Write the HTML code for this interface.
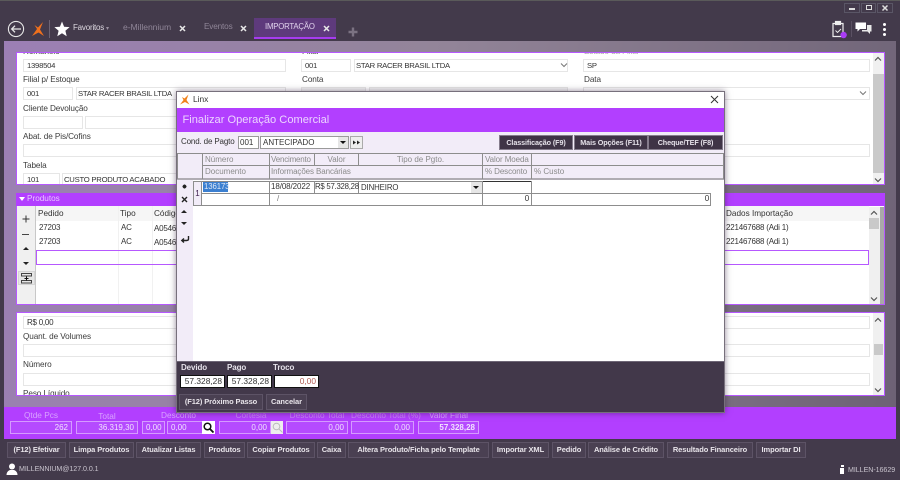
<!DOCTYPE html>
<html><head><meta charset="utf-8"><style>
html,body{margin:0;padding:0;width:900px;height:480px;overflow:hidden;background:#433a4b}
#w{position:relative;width:900px;height:480px;overflow:hidden;font-family:"Liberation Sans",sans-serif;font-size:8px;color:#333;filter:blur(.3px)}
#w div,#w svg{position:absolute}
.t{white-space:nowrap;line-height:10px;height:10px;letter-spacing:-.2px}
.l{color:#3c3c3c;font-size:8.2px;letter-spacing:-.1px}
.i{background:#fff;border:1px solid #e6e6e6;box-sizing:border-box;height:13px;line-height:11px;padding-left:3px;white-space:nowrap;overflow:hidden;font-size:7.7px;letter-spacing:-.25px;color:#333}
.b{background:#4a4052;border:1px solid #5d5366;box-sizing:border-box;height:16px;line-height:14px;text-align:center;color:#e8e4ea;font-weight:bold;font-size:7.5px;white-space:nowrap;letter-spacing:-.1px}
.h{color:#8b8b8b;font-size:8px;white-space:nowrap;line-height:10px;height:10px}
.f{background:#b54bff;border:1px solid #d59bff;box-sizing:border-box;height:13px;line-height:11px;text-align:right;padding-right:3px;color:#f2e2ff;font-size:8px;white-space:nowrap}
.q{color:#d9a2ff;font-size:8.3px;white-space:nowrap;line-height:10px;height:10px;text-align:center}
.d{background:#3f3446;border:1px solid #857c8c;box-sizing:border-box;height:15px;line-height:13px;text-align:center;color:#e6e2ea;font-weight:bold;font-size:7.2px;white-space:nowrap;letter-spacing:-.1px}
.m{background:#fff;border:1px solid #111;box-sizing:border-box;height:13px;line-height:11px;text-align:right;padding-right:2px;font-size:8.4px;color:#333}
.v{background:#8d8d8d;width:1px}
.g{background:#8d8d8d;height:1px}
</style></head><body><div id="w">

<!-- top bar -->
<div style="left:0;top:0;width:900px;height:1px;background:#5a5a5a"></div>
<svg style="left:7px;top:20px" width="18" height="18" viewBox="0 0 18 18" fill="none" stroke="#e6e6e6" stroke-width="1.1"><circle cx="9" cy="9" r="7.6"/><path d="M14 9H5M8 5.7L4.7 9 8 12.3" stroke-width="1.3"/></svg>
<svg style="left:31px;top:21px" width="14" height="16" viewBox="0 0 14 16"><path d="M1 15L6 8 3.5 4 7 6.5 12 1 9 8.5 13 15 7.5 11.5Z" fill="#f0701c"/></svg>
<div style="left:49px;top:20px;width:1px;height:18px;background:#6d6474"></div>
<svg style="left:54px;top:21px" width="16" height="16" viewBox="0 0 16 16"><path d="M8 .5L10.1 5.7 15.6 6.1 11.4 9.7 12.7 15.2 8 12.3 3.3 15.2 4.6 9.7.4 6.1 5.9 5.7Z" fill="#fff"/></svg>
<div class="t" style="left:73px;top:23px;color:#ddd8e0;font-size:8px">Favoritos</div>
<div class="t" style="left:106px;top:24px;color:#9a91a0;font-size:6px">▾</div>
<div class="t" style="left:123px;top:22px;color:#8f8597;font-size:8.6px;letter-spacing:-.05px">e-Millennium</div>
<div class="t" style="left:204px;top:22px;color:#8f8597;font-size:8.2px;letter-spacing:-.15px">Eventos</div>
<svg style="left:179px;top:25px" width="7" height="7" viewBox="0 0 7 7" stroke="#e8e8e8" stroke-width="1.5"><path d="M1 1L6 6M6 1L1 6"/></svg>
<svg style="left:240px;top:25px" width="7" height="7" viewBox="0 0 7 7" stroke="#e8e8e8" stroke-width="1.5"><path d="M1 1L6 6M6 1L1 6"/></svg>
<div style="left:254px;top:18px;width:82px;height:19px;background:#5e3a7c"></div>
<div style="left:254px;top:37px;width:82px;height:2px;background:#a63cf0"></div>
<div class="t" style="left:265px;top:22px;color:#e0d2ec;font-size:7.8px;letter-spacing:-.2px">IMPORTAÇÃO</div>
<svg style="left:323px;top:25px" width="7" height="7" viewBox="0 0 7 7" stroke="#e8e8e8" stroke-width="1.5"><path d="M1 1L6 6M6 1L1 6"/></svg>
<svg style="left:348px;top:27px" width="10" height="10" viewBox="0 0 10 10" fill="#7b7282"><path d="M3.8 .5h2.4v3.3h3.3v2.4H6.2v3.3H3.8V6.2H.5V3.8h3.300z"/></svg>

<div style="left:844px;top:3px;width:16px;height:10px;border:1px solid #5a5666;box-sizing:border-box"></div>
<div style="left:861px;top:3px;width:15px;height:10px;border:1px solid #5a5666;box-sizing:border-box"></div>
<div style="left:877px;top:3px;width:16px;height:10px;border:1px solid #5a5666;box-sizing:border-box"></div>
<div style="left:849px;top:8px;width:6px;height:2px;background:#ddd"></div>
<div style="left:866px;top:5px;width:6px;height:5px;border:1.5px solid #ddd;box-sizing:border-box"></div>
<svg style="left:881px;top:4px" width="8" height="8" viewBox="0 0 8 8" stroke="#ddd" stroke-width="1.5"><path d="M1.5 1.5L6.5 6.5M6.5 1.5L1.5 6.5"/></svg>

<svg style="left:831px;top:20px" width="20" height="19" viewBox="0 0 20 19" fill="none" stroke="#eee" stroke-width="1.2"><path d="M4 3.5H2v13h10V3.500h-2"/><rect x="4.500" y="1.500" width="5" height="3" fill="#eee"/><path d="M4.500 10.500l2 2 3.500-3.500" stroke-width=".9"/><circle cx="12.600" cy="15" r="3.200" fill="#a93cf5" stroke="none"/></svg>
<div style="left:851px;top:21px;width:1px;height:16px;background:#5b5163"></div>
<svg style="left:855px;top:22px" width="17" height="13" viewBox="0 0 17 13"><path d="M.5 .5H11V7H5L2.500 9.500V7H.5Z" fill="#fff"/><path d="M12 3h4.500v6.500H15V12L12.500 9.500H7V8h5Z" fill="#e8e8e8"/></svg>
<div style="left:883px;top:23px;width:3px;height:3px;background:#fff;border-radius:50%"></div>
<div style="left:883px;top:28px;width:3px;height:3px;background:#fff;border-radius:50%"></div>
<div style="left:883px;top:33px;width:3px;height:3px;background:#fff;border-radius:50%"></div>

<!-- content bg -->
<div style="left:4px;top:41px;width:892px;height:366px;background:linear-gradient(100deg,#9c7fb5 0%,#938599 45%,#6d6275 100%)"></div>

<!-- top form -->
<div style="left:16px;top:52px;width:869px;height:133px;background:#fff;border:1px solid #b658ff;box-sizing:border-box;overflow:hidden"></div>
<div style="left:17px;top:53px;width:867px;height:131px;overflow:hidden">
 <div class="t l" style="left:6px;top:-6px">Romaneio</div>
 <div class="t l" style="left:285px;top:-6px">Filial</div>
 <div class="t l" style="left:567px;top:-6px;color:#aaa">Estado da Filial</div>
 <div class="i" style="left:6px;top:6px;width:263px">1398504</div>
 <div class="i" style="left:284px;top:6px;width:50px">001</div>
 <div class="i" style="left:337px;top:6px;width:214px;padding-left:1px">STAR RACER BRASIL LTDA</div>
 <div class="i" style="left:566px;top:6px;width:287px">SP</div>
 <div class="t l" style="left:6px;top:22px">Filial p/ Estoque</div>
 <div class="t l" style="left:285px;top:22px">Conta</div>
 <div class="t l" style="left:567px;top:22px">Data</div>
 <div class="i" style="left:6px;top:34px;width:50px">001</div>
 <div class="i" style="left:59px;top:34px;width:210px;padding-left:1px">STAR RACER BRASIL LTDA</div>
 <div class="i" style="left:284px;top:34px;width:65px;background:#f4f4f4"></div>
 <div class="i" style="left:352px;top:34px;width:199px;background:#f4f4f4"></div>
 <div class="i" style="left:566px;top:34px;width:287px"></div>
 <div class="t l" style="left:6px;top:51px">Cliente Devolução</div>
 <div class="i" style="left:6px;top:63px;width:60px"></div>
 <div class="i" style="left:68px;top:63px;width:200px"></div>
 <div class="t l" style="left:6px;top:79px">Abat. de Pis/Cofins</div>
 <div class="i" style="left:6px;top:91px;width:847px"></div>
 <div class="t l" style="left:6px;top:108px">Tabela</div>
 <div class="i" style="left:6px;top:120px;width:37px">101</div>
 <div class="i" style="left:45px;top:120px;width:200px;padding-left:1px">CUSTO PRODUTO ACABADO</div>
 <svg style="left:543px;top:9px" width="8" height="6" viewBox="0 0 8 6" fill="none" stroke="#777" stroke-width="1"><path d="M1 1.500L4 4.500 7 1.500"/></svg>
 <svg style="left:842px;top:37px" width="8" height="6" viewBox="0 0 8 6" fill="none" stroke="#777" stroke-width="1"><path d="M1 1.500L4 4.500 7 1.500"/></svg>
 <div style="left:856px;top:0;width:11px;height:131px;background:#f0f0f0"></div>
 <div style="left:856px;top:21px;width:11px;height:99px;background:#c9c9c9"></div>
 <svg style="left:857px;top:3px" width="8" height="6" viewBox="0 0 8 6" fill="none" stroke="#555" stroke-width="1.2"><path d="M1 4.500L4 1.500 7 4.500"/></svg>
 <svg style="left:857px;top:124px" width="8" height="6" viewBox="0 0 8 6" fill="none" stroke="#555" stroke-width="1.2"><path d="M1 1.500L4 4.500 7 1.500"/></svg>
</div>

<!-- produtos -->
<div style="left:16px;top:193px;width:869px;height:13px;background:#b23fff"></div>
<div style="left:19px;top:197px;width:0;height:0;border-left:3px solid transparent;border-right:3px solid transparent;border-top:4px solid #fff"></div>
<div class="t" style="left:27px;top:194px;color:#e6c6ff;font-size:8.2px;letter-spacing:0">Produtos</div>
<div style="left:16px;top:206px;width:869px;height:99px;background:#fff;border:1px solid #b658ff;border-top:0;box-sizing:border-box"></div>
<div style="left:17px;top:206px;width:19px;height:98px;background:#f0f0f0;border-right:1px solid #c8c8c8;box-sizing:border-box"></div>
<div style="left:36px;top:206px;width:833px;height:15px;background:#f6f6f6"></div>
<div style="left:118px;top:206px;width:1px;height:98px;background:#f1f1f1"></div>
<div style="left:152px;top:206px;width:1px;height:98px;background:#f1f1f1"></div>
<div class="t" style="left:38px;top:209px;font-size:8.2px;letter-spacing:0">Pedido</div>
<div class="t" style="left:120px;top:209px;font-size:8.2px;letter-spacing:0">Tipo</div>
<div class="t" style="left:154px;top:209px;font-size:8.2px;letter-spacing:0">Código</div>
<div class="t" style="left:726px;top:209px;font-size:8.2px;letter-spacing:0">Dados Importação</div>
<div class="t" style="left:39px;top:223px">27203</div><div class="t" style="left:121px;top:223px">AC</div><div class="t" style="left:154px;top:224px">A05461</div><div class="t" style="left:726px;top:223px">221467688 (Adi 1)</div>
<div class="t" style="left:39px;top:237px">27203</div><div class="t" style="left:121px;top:237px">AC</div><div class="t" style="left:154px;top:238px">A05462</div><div class="t" style="left:726px;top:237px">221467688 (Adi 1)</div>
<div style="left:36px;top:250px;width:833px;height:15px;border:1.5px solid #b658ff;box-sizing:border-box"></div>
<svg style="left:22px;top:215px" width="8" height="8" viewBox="0 0 8 8" stroke="#333" stroke-width="1"><path d="M4 .5V7.500M.5 4H7.500"/></svg>
<div style="left:22px;top:234px;width:7px;height:1px;background:#444"></div>
<div style="left:23px;top:247px;width:0;height:0;border-left:3px solid transparent;border-right:3px solid transparent;border-bottom:3px solid #222"></div>
<div style="left:23px;top:262px;width:0;height:0;border-left:3px solid transparent;border-right:3px solid transparent;border-top:3px solid #222"></div>
<div style="left:18px;top:271px;width:17px;height:14px;background:#e6e6e6;border:1px solid #d5d5d5;box-sizing:border-box"></div>
<svg style="left:21px;top:273px" width="11" height="11" viewBox="0 0 11 11" fill="none" stroke="#444"><rect x=".5" y=".5" width="10" height="2.500"/><rect x=".5" y="7.500" width="10" height="2.500"/><path d="M5.500 3.500v4M3.500 5.500h4" stroke="#111"/></svg>
<div style="left:869px;top:207px;width:11px;height:97px;background:#f0f0f0"></div>
<div style="left:880px;top:207px;width:4px;height:97px;background:#a9a9a9"></div>
<div style="left:869px;top:218px;width:10px;height:11px;background:#c9c9c9"></div>
<svg style="left:870px;top:210px" width="8" height="6" viewBox="0 0 8 6" fill="none" stroke="#555" stroke-width="1.2"><path d="M1 4.500L4 1.500 7 4.500"/></svg>
<svg style="left:870px;top:296px" width="8" height="6" viewBox="0 0 8 6" fill="none" stroke="#555" stroke-width="1.2"><path d="M1 1.500L4 4.500 7 1.500"/></svg>

<!-- lower form -->
<div style="left:16px;top:312px;width:869px;height:84px;background:#fff;border:1px solid #b658ff;box-sizing:border-box"></div>
<div style="left:17px;top:313px;width:867px;height:82px;overflow:hidden">
 <div class="i" style="left:6px;top:3px;width:847px;font-size:8px">R$ 0,00</div>
 <div class="t l" style="left:6px;top:19px">Quant. de Volumes</div>
 <div class="i" style="left:6px;top:31px;width:847px"></div>
 <div class="t l" style="left:6px;top:47px">Número</div>
 <div class="i" style="left:6px;top:60px;width:847px"></div>
 <div class="t l" style="left:6px;top:76px">Peso Líquido</div>
 <div style="left:856px;top:0;width:11px;height:82px;background:#f0f0f0"></div>
 <div style="left:857px;top:31px;width:9px;height:11px;background:#c9c9c9"></div>
 <svg style="left:857px;top:4px" width="8" height="6" viewBox="0 0 8 6" fill="none" stroke="#555" stroke-width="1.2"><path d="M1 4.500L4 1.500 7 4.500"/></svg>
 <svg style="left:857px;top:74px" width="8" height="6" viewBox="0 0 8 6" fill="none" stroke="#555" stroke-width="1.2"><path d="M1 1.500L4 4.500 7 1.500"/></svg>
</div>

<!-- totals -->
<div style="left:4px;top:407px;width:892px;height:32px;background:#b23fff"></div>
<div class="q" style="left:10px;top:410px;width:62px">Qtde Pcs</div>
<div class="q" style="left:76px;top:411px;width:62px">Total</div>
<div class="q" style="left:142px;top:410px;width:73px">Desconto</div>
<div class="q" style="left:219px;top:410px;width:64px;color:#c985f5">Cortesia</div>
<div class="q" style="left:286px;top:410px;width:62px;color:#c985f5">Desconto Total</div>
<div class="q" style="left:351px;top:410px;width:63px;color:#c985f5">Desconto Total (%)</div>
<div class="q" style="left:418px;top:410px;width:61px">Valor Final</div>
<div class="f" style="left:10px;top:421px;width:62px">262</div>
<div class="f" style="left:76px;top:421px;width:62px">36.319,30</div>
<div class="f" style="left:142px;top:421px;width:23px;text-align:left;padding-left:3px">0,00</div>
<div class="f" style="left:167px;top:421px;width:36px;text-align:left;padding-left:3px">0,00</div>
<div style="left:202px;top:421px;width:13px;height:13px;background:#fff"></div>
<svg style="left:203px;top:422px" width="11" height="11" viewBox="0 0 11 11" fill="none" stroke="#111" stroke-width="1.5"><circle cx="4.500" cy="4.500" r="3.300"/><path d="M7 7l3.500 3.500" stroke-width="1.800"/></svg>
<div class="f" style="left:219px;top:421px;width:52px">0,00</div>
<div style="left:271px;top:421px;width:12px;height:13px;background:#eee"></div>
<svg style="left:272px;top:422px" width="11" height="11" viewBox="0 0 11 11" fill="none" stroke="#bbb" stroke-width="1"><circle cx="4.500" cy="4.500" r="3.300"/><path d="M7 7l3.500 3.500"/></svg>
<div class="f" style="left:286px;top:421px;width:62px">0,00</div>
<div class="f" style="left:351px;top:421px;width:63px">0,00</div>
<div class="f" style="left:418px;top:421px;width:61px;font-weight:bold">57.328,28</div>

<!-- bottom buttons -->
<div class="b" style="left:7px;top:442px;width:59px">(F12) Efetivar</div>
<div class="b" style="left:69px;top:442px;width:65px">Limpa Produtos</div>
<div class="b" style="left:136px;top:442px;width:65px">Atualizar Listas</div>
<div class="b" style="left:204px;top:442px;width:41px">Produtos</div>
<div class="b" style="left:247px;top:442px;width:68px">Copiar Produtos</div>
<div class="b" style="left:317px;top:442px;width:29px">Caixa</div>
<div class="b" style="left:348px;top:442px;width:141px">Altera Produto/Ficha pelo Template</div>
<div class="b" style="left:492px;top:442px;width:57px">Importar XML</div>
<div class="b" style="left:552px;top:442px;width:34px">Pedido</div>
<div class="b" style="left:588px;top:442px;width:76px">Análise de Crédito</div>
<div class="b" style="left:667px;top:442px;width:86px">Resultado Financeiro</div>
<div class="b" style="left:756px;top:442px;width:50px">Importar DI</div>

<!-- status -->
<svg style="left:6px;top:463px" width="12" height="12" viewBox="0 0 12 12" fill="#fff"><circle cx="6" cy="3.500" r="3"/><path d="M.5 12c0-3 2-4.500 3.500-5h4c1.500.5 3.500 2 3.500 5z"/></svg>
<div class="t" style="left:19px;top:464px;color:#c9c4ce;font-size:7.1px;letter-spacing:-.05px">MILLENNIUM@127.0.0.1</div>
<div style="left:841px;top:465px;width:3px;height:2px;background:#fff"></div>
<div style="left:840px;top:468px;width:4px;height:6px;background:#fff"></div>
<div class="t" style="left:848px;top:465px;color:#c9c4ce;font-size:7.1px;letter-spacing:-.05px">MILLEN-16629</div>

<!-- modal -->
<div style="left:176px;top:91px;width:549px;height:322px;background:#fff;border:1px solid #77707c;box-sizing:border-box;box-shadow:0 0 6px rgba(40,20,50,.5)"></div>
<svg style="left:179px;top:94px" width="11" height="11" viewBox="0 0 11 11"><path d="M1 10.500L4.500 6 3 3 5.500 4.500 9.500.5 7.500 6 10.500 10.500 6 8Z" fill="#f0821c"/></svg>
<div class="t" style="left:193px;top:94px;color:#333;font-size:8.4px;letter-spacing:0">Linx</div>
<svg style="left:710px;top:95px" width="9" height="9" viewBox="0 0 9 9" stroke="#333" stroke-width="1"><path d="M1 1L8 8M8 1L1 8"/></svg>
<div style="left:177px;top:108px;width:547px;height:24px;background:#b23fff"></div>
<div class="t" style="left:182.500px;top:115px;color:#ecd5ff;font-size:11.1px;letter-spacing:0;line-height:11px;height:11px">Finalizar Operação Comercial</div>
<div style="left:177px;top:132px;width:547px;height:21px;background:#f2ecf8"></div>
<div class="t" style="left:181px;top:137px;color:#333;font-size:8px;letter-spacing:-.15px">Cond. de Pagto</div>
<div style="left:238px;top:136px;width:21px;height:13px;background:#fff;border:1px solid #9a9a9a;box-sizing:border-box;line-height:11px;padding-left:1px;font-size:8px">001</div>
<div style="left:260px;top:136px;width:89px;height:13px;background:#fff;border:1px solid #9a9a9a;box-sizing:border-box;line-height:11px;padding-left:2px;font-size:8px">ANTECIPADO</div>
<div style="left:338px;top:137px;width:10px;height:11px;background:#e6e6e6"></div>
<div style="left:340px;top:141px;width:0;height:0;border-left:3px solid transparent;border-right:3px solid transparent;border-top:3px solid #111"></div>
<div style="left:350px;top:136px;width:13px;height:13px;background:#eee;border:1px solid #aaa;box-sizing:border-box"></div>
<svg style="left:352px;top:140px" width="9" height="5" viewBox="0 0 9 5" fill="#222"><path d="M1 .5L4 2.500 1 4.500ZM5 .5L8 2.500 5 4.500Z"/></svg>
<div class="d" style="left:499px;top:135px;width:74px">Classificação (F9)</div>
<div class="d" style="left:574px;top:135px;width:74px">Mais Opções (F11)</div>
<div class="d" style="left:648px;top:135px;width:75px">Cheque/TEF (F8)</div>

<!-- grid header -->
<div style="left:177px;top:153px;width:547px;height:26px;background:#f2ecf8"></div>
<div class="g" style="left:177px;top:153px;width:547px"></div>
<div class="g" style="left:202px;top:165px;width:521px"></div>
<div class="g" style="left:177px;top:178px;width:547px;height:2px;background:#b0acb3"></div>
<div class="v" style="left:177px;top:153px;height:26px"></div>
<div class="v" style="left:202px;top:153px;height:26px"></div>
<div class="v" style="left:269px;top:153px;height:26px"></div>
<div class="v" style="left:314px;top:153px;height:13px"></div>
<div class="v" style="left:358px;top:153px;height:13px"></div>
<div class="v" style="left:482px;top:153px;height:26px"></div>
<div class="v" style="left:531px;top:153px;height:26px"></div>
<div class="v" style="left:723px;top:153px;height:26px"></div>
<div class="h" style="left:205px;top:155px">Número</div>
<div class="h" style="left:271px;top:155px;letter-spacing:-.2px">Vencimento</div>
<div class="h" style="left:315px;top:155px;width:43px;text-align:center">Valor</div>
<div class="h" style="left:359px;top:155px;width:123px;text-align:center">Tipo de Pgto.</div>
<div class="h" style="left:485px;top:155px;letter-spacing:-.1px">Valor Moeda</div>
<div class="h" style="left:205px;top:167px">Documento</div>
<div class="h" style="left:271px;top:167px;letter-spacing:-.1px">Informações Bancárias</div>
<div class="h" style="left:485px;top:167px;letter-spacing:-.1px">% Desconto</div>
<div class="h" style="left:534px;top:167px">% Custo</div>

<!-- grid body -->
<div style="left:177px;top:180px;width:547px;height:181px;background:#fff"></div>
<div style="left:177px;top:180px;width:16px;height:181px;background:#f2ecf8"></div>
<svg style="left:181px;top:183px" width="7" height="7" viewBox="0 0 7 7" stroke="#222" stroke-width="1"><path d="M3.500 1.500v4M1.500 3.500h4M2 2l3 3M5 2L2 5"/></svg>
<svg style="left:181px;top:196px" width="7" height="7" viewBox="0 0 7 7" stroke="#222" stroke-width="1.400"><path d="M1 1l5 5M6 1L1 6"/></svg>
<div style="left:181px;top:210px;width:0;height:0;border-left:3.500px solid transparent;border-right:3.500px solid transparent;border-bottom:3.500px solid #222"></div>
<div style="left:181px;top:222px;width:0;height:0;border-left:3.500px solid transparent;border-right:3.500px solid transparent;border-top:3.500px solid #222"></div>
<svg style="left:180px;top:235px" width="10" height="9" viewBox="0 0 10 9" fill="none" stroke="#222" stroke-width="1.400"><path d="M8.500 1v3c0 1-1 1.500-2 1.500H2M4 3.500L1.800 5.500 4 7.500"/></svg>

<div style="left:193px;top:181px;width:9px;height:25px;background:#f2ecf8;border:1px solid #8d8d8d;box-sizing:border-box;text-align:center;line-height:23px;font-size:8px;color:#402050">1</div>
<div style="left:202px;top:181px;width:280px;height:1px;background:#888"></div>
<div style="left:482px;top:181px;width:50px;height:1px;background:#333"></div>
<div class="g" style="left:202px;top:193px;width:509px"></div>
<div class="g" style="left:202px;top:205px;width:509px"></div>
<div class="v" style="left:269px;top:181px;height:25px"></div>
<div class="v" style="left:314px;top:181px;height:12px"></div>
<div class="v" style="left:358px;top:181px;height:12px"></div>
<div class="v" style="left:482px;top:181px;height:25px"></div>
<div class="v" style="left:531px;top:181px;height:25px"></div>
<div class="v" style="left:710px;top:193px;height:13px"></div>
<div style="left:203px;top:182px;width:25px;height:10px;background:#3b7fd0"></div>
<div class="t" style="left:204px;top:182px;color:#dfe9f6;font-size:7.8px;letter-spacing:-.1px">136173</div>
<div class="t" style="left:271px;top:182px;font-size:8px;letter-spacing:-.1px">18/08/2022</div>
<div class="t" style="left:315px;top:182px;font-size:7.8px;letter-spacing:-.25px">R$ 57.328,28</div>
<div class="t" style="left:361px;top:183px;font-size:7.800px;letter-spacing:-.1px">DINHEIRO</div>
<div style="left:471px;top:182px;width:11px;height:11px;background:#e6e6e6"></div>
<div style="left:473px;top:186px;width:0;height:0;border-left:3px solid transparent;border-right:3px solid transparent;border-top:3px solid #111"></div>
<div class="t" style="left:277px;top:194px;color:#777;font-size:8px">/</div>
<div class="t" style="left:482px;top:194px;width:47px;text-align:right;font-size:8px">0</div>
<div class="t" style="left:532px;top:194px;width:177px;text-align:right;font-size:8px">0</div>

<!-- footer -->
<div style="left:177px;top:361px;width:547px;height:51px;background:#42384a;border-top:1px solid #6e6676;box-sizing:border-box"></div>
<div class="t" style="left:181px;top:363px;color:#e6e2ea;font-size:8px;font-weight:bold;letter-spacing:-.1px">Devido</div>
<div class="t" style="left:227px;top:363px;color:#e6e2ea;font-size:8px;font-weight:bold;letter-spacing:-.1px">Pago</div>
<div class="t" style="left:273px;top:363px;color:#e6e2ea;font-size:8px;font-weight:bold;letter-spacing:-.1px">Troco</div>
<div class="m" style="left:180px;top:375px;width:45px">57.328,28</div>
<div class="m" style="left:227px;top:375px;width:45px">57.328,28</div>
<div class="m" style="left:274px;top:375px;width:45px;color:#b05a50">0,00</div>
<div class="b" style="left:179px;top:394px;width:84px">(F12) Próximo Passo</div>
<div class="b" style="left:266px;top:394px;width:41px">Cancelar</div>
</div></body></html>
